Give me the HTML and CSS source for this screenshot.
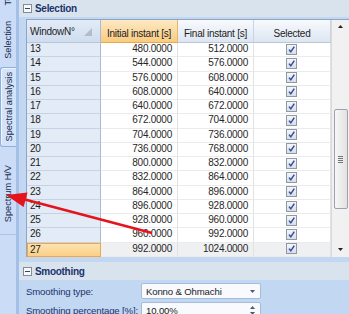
FILE: index.html
```html
<!DOCTYPE html>
<html>
<head>
<meta charset="utf-8">
<link rel="stylesheet" href="styles.css">
</head>
<body>
<div class="app">
  <div class="tabs">
    <div class="tab tab0"><span class="vtext">Tools</span></div>
    <div class="tab tab1"><span class="vtext">Selection</span></div>
    <div class="tab tab2 active"><span class="vtext">Spectral analysis</span></div>
    <div class="tab tab3"><span class="vtext">Spectrum H/V</span></div>
    <div class="tab-rest"></div>
  </div>
  <div class="main">
    <div class="sec-head">
      <svg class="minus" width="9" height="9" viewBox="0 0 9 9"><rect x="0.5" y="0.5" width="8" height="8" fill="#f7f9fb" stroke="#7f8c9c"/><rect x="2" y="4" width="5" height="1" fill="#3a4658"/></svg>
      <span>Selection</span>
    </div>
    <div class="grid">
      <div class="table">
        <div class="hrow">
          <div class="h c1"><span>WindowN°</span><svg class="sort" width="8" height="8" viewBox="0 0 8 8"><polygon points="8,0 8,8 0,8" fill="#b3bdca"/></svg></div>
          <div class="h c2">Initial instant [s]</div>
          <div class="h c3">Final instant [s]</div>
          <div class="h c4">Selected</div>
        </div>
        <div class="r"><div class="d c1">13</div><div class="d c2">480.0000</div><div class="d c3">512.0000</div><div class="d c4"><span class="chk"></span></div></div>
        <div class="r"><div class="d c1">14</div><div class="d c2">544.0000</div><div class="d c3">576.0000</div><div class="d c4"><span class="chk"></span></div></div>
        <div class="r"><div class="d c1">15</div><div class="d c2">576.0000</div><div class="d c3">608.0000</div><div class="d c4"><span class="chk"></span></div></div>
        <div class="r"><div class="d c1">16</div><div class="d c2">608.0000</div><div class="d c3">640.0000</div><div class="d c4"><span class="chk"></span></div></div>
        <div class="r"><div class="d c1">17</div><div class="d c2">640.0000</div><div class="d c3">672.0000</div><div class="d c4"><span class="chk"></span></div></div>
        <div class="r"><div class="d c1">18</div><div class="d c2">672.0000</div><div class="d c3">704.0000</div><div class="d c4"><span class="chk"></span></div></div>
        <div class="r"><div class="d c1">19</div><div class="d c2">704.0000</div><div class="d c3">736.0000</div><div class="d c4"><span class="chk"></span></div></div>
        <div class="r"><div class="d c1">20</div><div class="d c2">736.0000</div><div class="d c3">768.0000</div><div class="d c4"><span class="chk"></span></div></div>
        <div class="r"><div class="d c1">21</div><div class="d c2">800.0000</div><div class="d c3">832.0000</div><div class="d c4"><span class="chk"></span></div></div>
        <div class="r"><div class="d c1">22</div><div class="d c2">832.0000</div><div class="d c3">864.0000</div><div class="d c4"><span class="chk"></span></div></div>
        <div class="r"><div class="d c1">23</div><div class="d c2">864.0000</div><div class="d c3">896.0000</div><div class="d c4"><span class="chk"></span></div></div>
        <div class="r"><div class="d c1">24</div><div class="d c2">896.0000</div><div class="d c3">928.0000</div><div class="d c4"><span class="chk"></span></div></div>
        <div class="r"><div class="d c1">25</div><div class="d c2">928.0000</div><div class="d c3">960.0000</div><div class="d c4"><span class="chk"></span></div></div>
        <div class="r"><div class="d c1">26</div><div class="d c2">960.0000</div><div class="d c3">992.0000</div><div class="d c4"><span class="chk"></span></div></div>
        <div class="r sel"><div class="d c1">27</div><div class="d c2">992.0000</div><div class="d c3">1024.0000</div><div class="d c4"><span class="chk"></span></div></div>
      </div>
      <div class="vscroll">
        <svg class="sarrow" width="5" height="3" viewBox="0 0 5 3"><polygon points="2.5,0 5,3 0,3" fill="#222"/></svg>
        <div class="thumb"><span></span><span></span><span></span><span></span></div>
        <div class="sfill"></div>
        <svg class="sarrow" width="5" height="3" viewBox="0 0 5 3"><polygon points="0,0 5,0 2.5,3" fill="#222"/></svg>
      </div>
    </div>
    <div class="sec-head smooth">
      <svg class="minus" width="9" height="9" viewBox="0 0 9 9"><rect x="0.5" y="0.5" width="8" height="8" fill="#f7f9fb" stroke="#7f8c9c"/><rect x="2" y="4" width="5" height="1" fill="#3a4658"/></svg>
      <span>Smoothing</span>
    </div>
    <div class="form">
      <div class="lbl">Smoothing type:</div>
      <div class="combo"><span>Konno &amp; Ohmachi</span><svg class="drop" width="5" height="3" viewBox="0 0 5 3"><polygon points="0,0 5,0 2.5,3" fill="#4b5a70"/></svg></div>
      <div class="lbl">Smoothing percentage [%]:</div>
      <div class="combo spin"><span>10.00%</span>
        <div class="spins">
          <svg width="5" height="3" viewBox="0 0 5 3"><polygon points="2.5,0 5,3 0,3" fill="#4b5a70"/></svg>
          <svg width="5" height="3" viewBox="0 0 5 3"><polygon points="0,0 5,0 2.5,3" fill="#4b5a70"/></svg>
        </div>
      </div>
    </div>
  </div>
  <svg class="arrow" width="349" height="314" viewBox="0 0 349 314">
    <line x1="152" y1="233" x2="24" y2="199.2" stroke="#e5141c" stroke-width="2.6"/>
    <polygon points="6,195 27.5,192.6 23.6,207" fill="#e5141c"/>
  </svg>
</div>
</body>
</html>
```

FILE: styles.css
```css
html, body {
  margin: 0;
  padding: 0;
}
body {
  width: 349px;
  height: 314px;
  overflow: hidden;
  font-family: "Liberation Sans", Arial, sans-serif;
}
.app {
  position: relative;
  display: flex;
  width: 349px;
  height: 314px;
  background: #c2d7f2;
  overflow: hidden;
}

/* vertical tabs */
.tabs {
  width: 16px;
  flex: none;
  background: #cbddf6;
  border-right: 3px solid #a5c0e6;
  display: flex;
  flex-direction: column;
}
.tab {
  box-sizing: border-box;
  display: flex;
  flex-direction: column;
  align-items: center;
  justify-content: center;
  color: #172a4f;
  font-size: 9.2px;
  overflow: hidden;
}
.vtext {
  writing-mode: vertical-rl;
  transform: rotate(180deg);
  white-space: nowrap;
  line-height: 10px;
}
.tab0 {
  height: 8px;
  justify-content: flex-end;
  padding-bottom: 3px;
}
.tab1 {
  height: 59px;
  padding-top: 4px;
}
.tab2 {
  height: 80px;
  background: #d3e3f8;
  border: 1px solid #8fb0dd;
  border-right: none;
  border-radius: 3px 0 0 3px;
  box-shadow: inset 1px 1px 0 #eef4fc;
}
.tab3 {
  height: 88px;
  padding-top: 6px;
  border-bottom: 1px solid #aac5ea;
}
.tab-rest {
  flex: 1;
}

/* main panel */
.main {
  flex: 1;
  min-width: 0;
  display: flex;
  flex-direction: column;
}
.sec-head {
  flex: none;
  height: 17px;
  background: #d8e3ee;
  display: flex;
  align-items: center;
  gap: 3px;
  padding-left: 4px;
  font-weight: bold;
  font-size: 10px;
  letter-spacing: -0.3px;
  color: #1a336d;
}
.sec-head.smooth {
  height: 18px;
  margin-top: 5px;
}
.minus {
  display: block;
  flex: none;
}

/* grid */
.grid {
  flex: none;
  margin: 2px 0 0 7px;
  height: 238px;
  box-sizing: border-box;
  border-top: 1px solid #8fa6c2;
  border-left: 1px solid #8fa6c2;
  background: #fff;
  display: flex;
}
.table {
  width: 304px;
  flex: none;
  font-size: 10px;
  letter-spacing: -0.25px;
  color: #222;
}
.c1 { width: 74px; }
.c2 { width: 77px; }
.c3 { width: 76px; }
.c4 { width: 77px; }
.hrow {
  display: flex;
  height: 23px;
}
.h {
  box-sizing: border-box;
  height: 23px;
  border-right: 1px solid #c8d4e3;
  border-bottom: 1px solid #b7c6d9;
  background: linear-gradient(#f8fafd, #dde6f1);
  display: flex;
  align-items: flex-end;
  justify-content: center;
  padding-bottom: 3px;
  white-space: nowrap;
  color: #1d1d1d;
}
.h.c1 {
  justify-content: flex-start;
  align-items: center;
  padding: 0 0 0 3px;
  background: linear-gradient(#e2ebf7, #d0ddef);
  border-right-color: #a9bcd6;
}
.h.c1 .sort {
  margin-left: auto;
  margin-right: 8px;
  margin-top: 2px;
}
.h.c2 {
  background: linear-gradient(#fde9c4, #f9cb80);
  border-bottom-color: #e8a94d;
  border-right-color: #e7b66e;
}
.r {
  display: flex;
  height: 14.27px;
}
.d {
  box-sizing: border-box;
  height: 100%;
  border-right: 1px solid #e2e2e2;
  border-bottom: 1px solid #ebebeb;
  line-height: 12px;
  text-align: right;
  padding-right: 5px;
  color: #272727;
  white-space: nowrap;
}
.d.c1 {
  text-align: left;
  padding: 0 0 0 3px;
  background: #e3ebf6;
  border-right-color: #a9bcd6;
  border-bottom-color: #c6d3e5;
  color: #1b1b1b;
}
.sel .d {
  background: #eff0f2;
}
.sel .d.c1 {
  background: linear-gradient(#fde3b0, #fbcf86);
  border: 1px solid #eca84b;
  padding-left: 2px;
  line-height: 11px;
}
.d.c4 {
  display: flex;
  align-items: center;
  justify-content: center;
  padding: 0 2px 1px 0;
}
.chk {
  display: block;
  width: 11px;
  height: 11px;
  box-sizing: border-box;
  border: 1px solid #8e98a8;
  background:
    url("data:image/svg+xml;utf8,<svg xmlns='http://www.w3.org/2000/svg' width='9' height='9' viewBox='0 0 9 9'><path d='M2 4.6 L3.8 6.8 L7.3 1.6' fill='none' stroke='%232c4ea6' stroke-width='1.5'/></svg>") center / 9px 9px no-repeat,
    linear-gradient(#f6f6f6, #d9dde2);
}

/* scrollbar */
.vscroll {
  width: 18px;
  flex: none;
  box-sizing: border-box;
  background: #f1f1f1;
  border-left: 1px solid #dadada;
  display: flex;
  flex-direction: column;
  align-items: center;
  padding: 5px 0 6px;
}
.sarrow {
  display: block;
  flex: none;
}
.thumb {
  flex: none;
  margin-top: 81px;
  width: 14px;
  height: 100px;
  box-sizing: border-box;
  border: 1px solid #9ba3ad;
  border-radius: 2px;
  background: linear-gradient(90deg, #f7f7f7, #e2e2e2);
  display: flex;
  flex-direction: column;
  align-items: center;
  justify-content: center;
  gap: 1px;
}
.thumb span {
  display: block;
  width: 5px;
  height: 1px;
  background: #6f7680;
}
.sfill {
  flex: 1;
}

/* form */
.form {
  display: grid;
  grid-template-columns: 115px 120px;
  row-gap: 3px;
  padding: 3px 0 0 7px;
  font-size: 9.6px;
  letter-spacing: -0.15px;
}
.lbl {
  display: flex;
  align-items: center;
  color: #1c336b;
  white-space: nowrap;
}
.combo {
  height: 16px;
  box-sizing: border-box;
  border: 1px solid #a6bcda;
  border-radius: 2px;
  background: #f8fafd;
  display: flex;
  align-items: center;
  padding-left: 4px;
  color: #222;
  white-space: nowrap;
}
.drop {
  margin-left: auto;
  margin-right: 5px;
  display: block;
}
.spins {
  margin-left: auto;
  margin-right: 5px;
  display: flex;
  flex-direction: column;
  gap: 3px;
}
.spins svg {
  display: block;
}

/* annotation arrow overlay */
.arrow {
  position: absolute;
  left: 0;
  top: 0;
  pointer-events: none;
}
```
